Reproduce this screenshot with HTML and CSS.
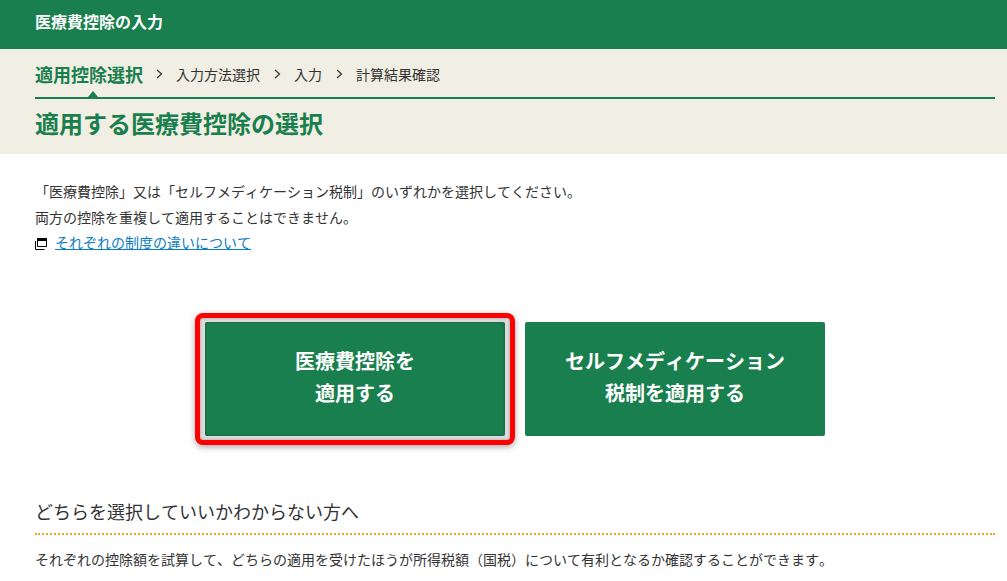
FILE: index.html
```html
<!DOCTYPE html>
<html lang="ja">
<head>
<meta charset="utf-8">
<title>医療費控除の入力</title>
<link rel="stylesheet" href="styles.css">
</head>
<body>
<header class="topbar">医療費控除の入力</header>
<section class="head">
  <ol class="steps">
    <li class="step current">適用控除選択</li>
    <li class="chev"><svg width="7" height="10" viewBox="0 0 7 10"><path d="M1 1l4.500 4-4.500 4" fill="none" stroke="#333" stroke-width="1.2"/></svg></li>
    <li class="step">入力方法選択</li>
    <li class="chev"><svg width="7" height="10" viewBox="0 0 7 10"><path d="M1 1l4.500 4-4.500 4" fill="none" stroke="#333" stroke-width="1.2"/></svg></li>
    <li class="step">入力</li>
    <li class="chev"><svg width="7" height="10" viewBox="0 0 7 10"><path d="M1 1l4.500 4-4.500 4" fill="none" stroke="#333" stroke-width="1.2"/></svg></li>
    <li class="step">計算結果確認</li>
  </ol>
  <h1 class="title">適用する医療費控除の選択</h1>
</section>
<main class="content">
  <p class="line">「医療費控除」又は「セルフメディケーション税制」のいずれかを選択してください。</p>
  <p class="line">両方の控除を重複して適用することはできません。</p>
  <p class="line linkline">
    <svg class="winicon" width="12" height="12" viewBox="0 0 12 12"><path d="M2.500 .5h9v8h-9z" fill="none" stroke="#000"/><path d="M2 0h10v3H2z"/><path d="M.5 3v8.500h9" fill="none" stroke="#000"/></svg>
    <a href="#" class="link">それぞれの制度の違いについて</a>
  </p>
  <div class="choices">
    <a class="choice selected" href="#">医療費控除を<br>適用する</a>
    <a class="choice" href="#">セルフメディケーション<br>税制を適用する</a>
  </div>
  <h2 class="sub">どちらを選択していいかわからない方へ</h2>
  <p class="line">それぞれの控除額を試算して、どちらの適用を受けたほうが所得税額（国税）について有利となるか確認することができます。</p>
</main>
</body>
</html>
```
FILE: styles.css
```css
* { box-sizing: border-box; }
html, body { margin: 0; padding: 0; height: 581px; overflow: hidden; }
body {
  background: #fff;
  color: #333;
  font-family: "Noto Sans CJK JP", "Noto Sans", sans-serif;
  font-size: 14px;
  font-kerning: none;
  text-spacing-trim: space-all;
  font-feature-settings: "palt" 0, "halt" 0, "chws" 0, "kern" 0;
}
.topbar {
  height: 49px;
  background: #1a7f4e;
  color: #fff;
  font-weight: 700;
  font-size: 16px;
  line-height: 42px;
  padding-left: 35px;
}
.head {
  height: 105px;
  background: #f1eee3;
  padding: 0 12px 0 35px;
}
.steps {
  list-style: none;
  margin: 0;
  padding: 1px 0 0;
  height: 50px;
  display: flex;
  align-items: center;
  border-bottom: 2px solid #1a7f4e;
  position: relative;
  font-size: 14px;
}
.steps::after {
  content: "";
  position: absolute;
  left: 53px;
  bottom: 0;
  border: 5px solid transparent;
  border-top: 0;
  border-bottom: 6px solid #1a7f4e;
}
.step.current { color: #1a7f4e; font-weight: 700; font-size: 18px; margin-right: -1px; }
.chev { display: flex; margin: 0 13px 0 14px; }
.title {
  margin: 0;
  color: #1a7f4e;
  font-size: 24px;
  font-weight: 700;
  line-height: 48px;
}
.content { padding: 25px 12px 0 35px; }
.line { margin: 0; line-height: 25.5px; height: 25.5px; white-space: nowrap; }
.linkline { display: flex; align-items: center; gap: 8px; }
.winicon { margin-top: 2px; }
.link { color: #0a7cc4; }
.choices {
  display: flex;
  justify-content: center;
  gap: 20px;
  margin-top: 66.5px;
}
.choice {
  width: 300px;
  height: 114px;
  background: #1a7f4e;
  color: #fff;
  font-weight: 700;
  font-size: 20px;
  line-height: 32px;
  border-radius: 2px;
  padding-bottom: 4px;
  display: flex;
  align-items: center;
  justify-content: center;
  text-align: center;
  text-decoration: none;
}
.choice.selected {
  position: relative;
  box-shadow: inset 0 0 3px rgba(0,0,0,.35);
}
.choice.selected::before {
  content: "";
  position: absolute;
  inset: -9px -10px;
  border: 5px solid #f00;
  border-radius: 8px;
  box-shadow: inset 0 0 3px rgba(0,0,0,.3), 0 2px 6px rgba(0,0,0,.35);
  z-index: -1;
  background: #dcdcdc;
}
.sub {
  margin: 61px 0 0;
  padding-bottom: 8px;
  font-weight: 400;
  font-size: 18px;
  line-height: 28px;
  border-bottom: 2px dotted #f5a623;
}
.sub + .line { margin-top: 12px; }
```
